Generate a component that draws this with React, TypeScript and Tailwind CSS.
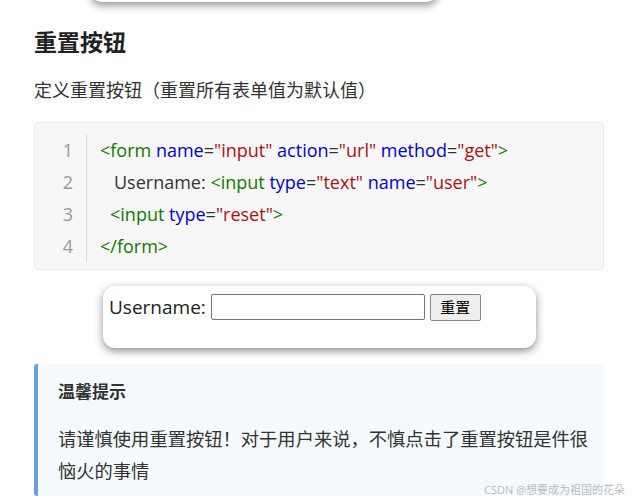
import * as React from 'react';

const font = { fontFamily: '"Open Sans", "Noto Sans CJK SC", sans-serif' };

const Tag = ({ children }: { children: React.ReactNode }) => (
  <span className="text-[#117700]">{children}</span>
);
const Attr = ({ children }: { children: React.ReactNode }) => (
  <span className="text-[#0000cc]">{children}</span>
);
const Str = ({ children }: { children: React.ReactNode }) => (
  <span className="text-[#aa1111]">{children}</span>
);

const lines: React.ReactNode[] = [
  <>
    <Tag>&lt;form</Tag> <Attr>name</Attr>=<Str>"input"</Str> <Attr>action</Attr>=<Str>"url"</Str>{' '}
    <Attr>method</Attr>=<Str>"get"</Str>
    <Tag>&gt;</Tag>
  </>,
  <>
    <span className="pl-[14px]">Username: </span>
    <Tag>&lt;input</Tag> <Attr>type</Attr>=<Str>"text"</Str> <Attr>name</Attr>=<Str>"user"</Str>
    <Tag>&gt;</Tag>
  </>,
  <>
    <span className="pl-[10px]" />
    <Tag>&lt;input</Tag> <Attr>type</Attr>=<Str>"reset"</Str>
    <Tag>&gt;</Tag>
  </>,
  <Tag>&lt;/form&gt;</Tag>
];

export default function App() {
  return (
    <div className="relative w-[633px] h-[502px] overflow-hidden bg-white text-[#333]" style={font}>
      {/* previous demo card edge */}
      <div className="absolute left-[90px] top-[-60px] w-[348px] h-[62px] rounded-xl bg-white shadow-[0_3px_8px_rgba(0,0,0,0.45)]" />

      <div className="pl-[34px] pr-[29px] pt-[25px]">
        <h2 className="text-[23px] font-bold leading-[34px] text-[#222]">重置按钮</h2>
        <p className="mt-[16px] text-[18px] leading-[30px] text-[#333]">定义重置按钮（重置所有表单值为默认值）</p>

        <div className="mt-[17px] rounded border border-[#eaeaea] bg-[#f7f7f7] pt-[11px] pb-[7px] text-[18px]">
          {lines.map((line, i) => (
            <div key={i} className="flex h-[32px] items-center">
              <div className="w-[52px] h-full flex items-center justify-end pr-[13px] text-[#999] border-r border-[#ddd]">
                {i + 1}
              </div>
              <div className="pl-[13px] whitespace-pre text-[#333]">{line}</div>
            </div>
          ))}
        </div>

        <div className="ml-[69px] mt-[16px] w-[433px] h-[62px] rounded-xl bg-white shadow-[0_3px_8px_rgba(0,0,0,0.45)] px-[6px] pt-[7px]">
          <div className="flex items-center gap-[5px] text-[19px] text-[#222]">
            <span>Username:</span>
            <input className="w-[214px] h-[26px] border border-[#777] rounded-[2px] bg-white" />
            <button className="h-[27px] w-[51px] border border-[#888] rounded-[2px] bg-[#efefef] text-[15px] text-black">
              重置
            </button>
          </div>
        </div>

        <div className="mt-[16px] h-[132px] rounded-[3px] border-l-4 border-[#6ca0dc] bg-[#f4faff] pl-[20px] pr-[20px] pt-[14px]">
          <div className="text-[17px] font-bold leading-[28px] text-[#333]">温馨提示</div>
          <p className="mt-[17px] w-[540px] text-[18.3px] leading-[32px] text-[#333]">
            请谨慎使用重置按钮！对于用户来说，不慎点击了重置按钮是件很恼火的事情
          </p>
        </div>
      </div>

      <div className="absolute right-[8px] bottom-[4px] text-[11px] text-[#bbb]">CSDN @想要成为祖国的花朵</div>
    </div>
  );
}
